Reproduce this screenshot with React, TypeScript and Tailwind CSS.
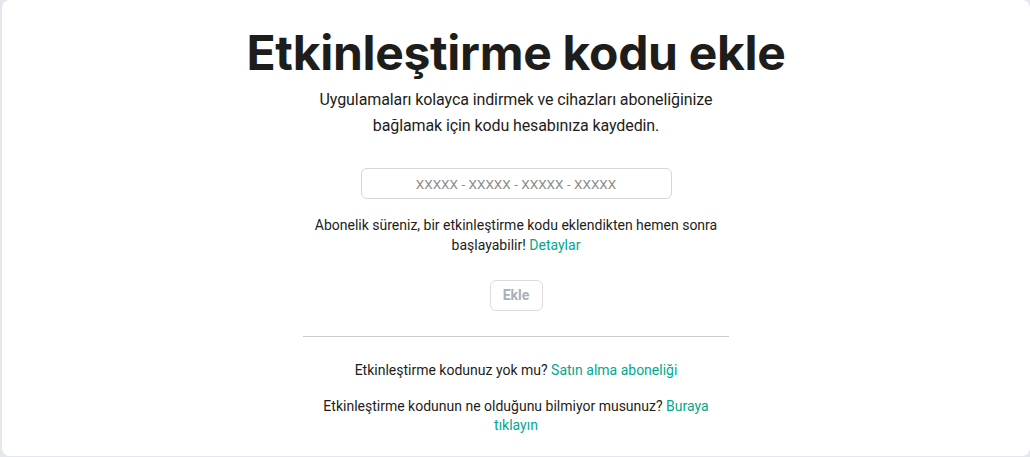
export default function App() {
  return (
    <div className="h-[457px] w-[1030px] overflow-hidden bg-[#e4e7eb] pl-[2px] pb-[1px]">
      <div
        className="flex h-full flex-col items-center rounded-lg bg-white pt-[23px] text-[#1d1d1b]"
        style={{ fontFamily: "Roboto, 'Noto Sans', sans-serif" }}
      >
        <h1
          className="text-[48px] font-bold leading-[60px] tracking-[-0.3px]"
          style={{ fontFamily: "Inter, sans-serif" }}
        >
          Etkinleştirme kodu ekle
        </h1>

        <p className="mt-[4px] w-[426px] text-center text-[16px] leading-[26px] tracking-[-0.1px]">
          Uygulamaları kolayca indirmek ve cihazları aboneliğinize bağlamak için kodu hesabınıza kaydedin.
        </p>

        <input
          type="text"
          placeholder="XXXXX - XXXXX - XXXXX - XXXXX"
          className="mt-[29px] h-[31px] w-[311px] rounded-md border border-[#d6d6d6] text-center text-[13.5px] outline-none placeholder:text-[#8c8c8c]"
        />

        <p className="mt-4 w-[426px] text-center text-[14px] leading-5">
          Abonelik süreniz, bir etkinleştirme kodu eklendikten hemen sonra başlayabilir!{" "}
          <a className="text-[#00a88e]">Detaylar</a>
        </p>

        <button
          disabled
          className="mt-[25px] h-[31px] w-[53px] rounded-md border border-[#dcdcdc] text-[14px] font-bold text-[#a8b0b8]"
        >
          Ekle
        </button>

        <div className="mt-[25px] h-px w-[426px] bg-[#cccccc]" />

        <div className="w-[426px] text-center text-[14px]">
          <p className="mt-[23px] leading-5">
            Etkinleştirme kodunuz yok mu?{" "}
            <a className="text-[#00a88e]">Satın alma aboneliği</a>
          </p>
          <p className="mt-[17px] leading-[19px]">
            Etkinleştirme kodunun ne olduğunu bilmiyor musunuz?{" "}
            <a className="text-[#00a88e]">Buraya tıklayın</a>
          </p>
        </div>
      </div>
    </div>
  );
}
